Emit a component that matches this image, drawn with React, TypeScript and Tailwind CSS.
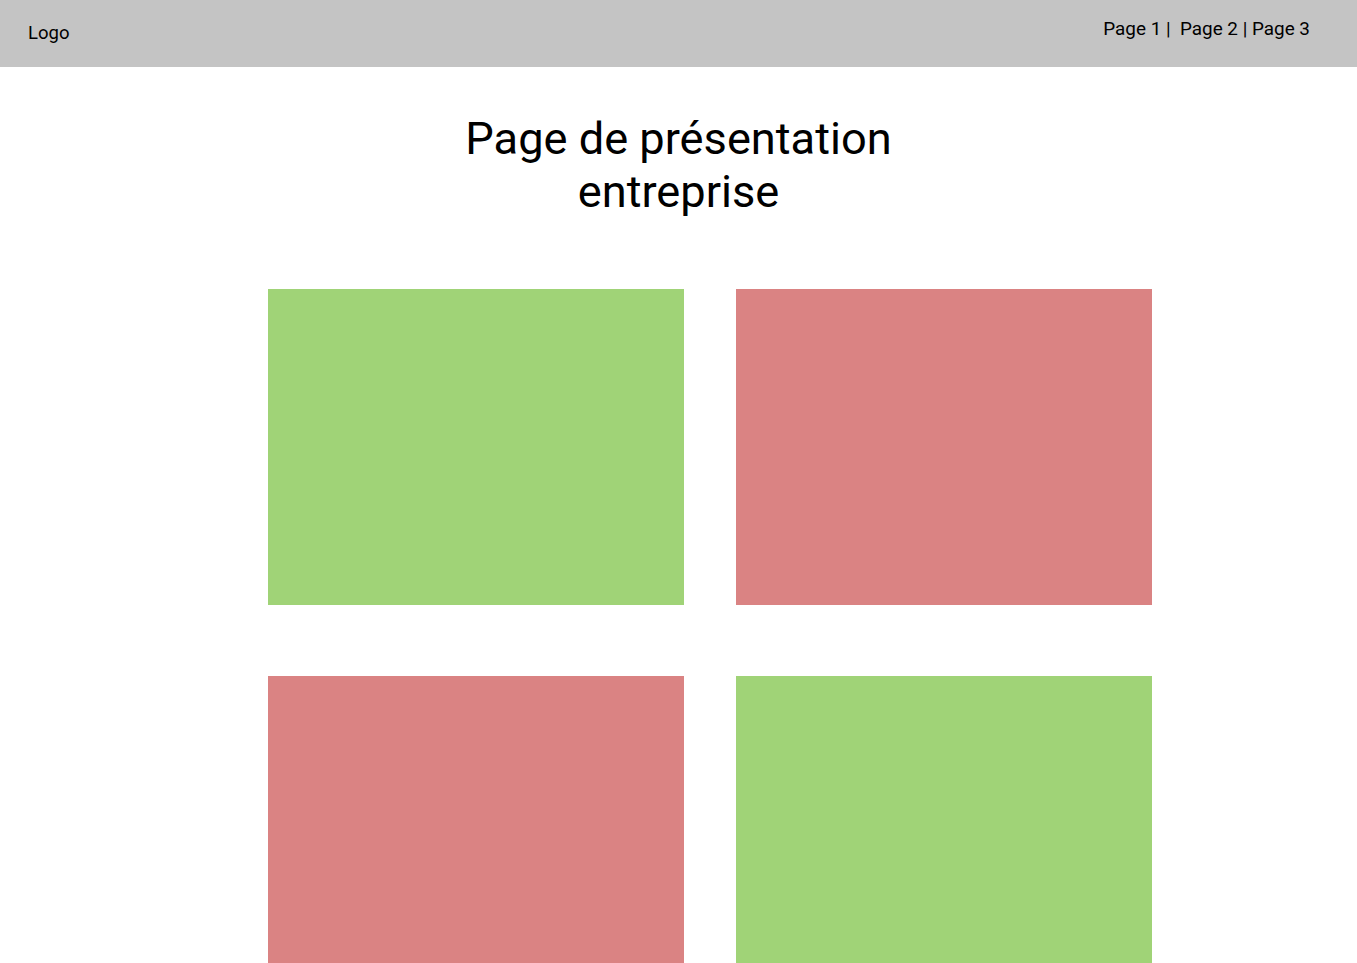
export default function App() {
  return (
    <div className="bg-white font-['Roboto',sans-serif] text-black overflow-hidden h-[963px]">
      <header className="h-[67px] bg-[#c4c4c4] flex justify-between pl-[28px] pr-[47px]">
        <div className="text-[18.5px] leading-none pt-[24px]">Logo</div>
        <nav className="text-[18.9px] leading-none pt-[20px] whitespace-pre">Page 1 |  Page 2 | Page 3</nav>
      </header>
      <h1 className="text-center text-[45.2px] leading-[53px] mt-[45px] font-normal">
        Page de présentation
        <br />
        entreprise
      </h1>
      <div className="ml-[268px] mt-[70.5px] grid grid-cols-[415.5px_415.5px] gap-x-[52.5px] gap-y-[71px]">
        <div className="h-[316px] bg-[#a0d377]" />
        <div className="h-[316px] bg-[#da8383]" />
        <div className="h-[316px] bg-[#da8383]" />
        <div className="h-[316px] bg-[#a0d377]" />
      </div>
    </div>
  );
}
